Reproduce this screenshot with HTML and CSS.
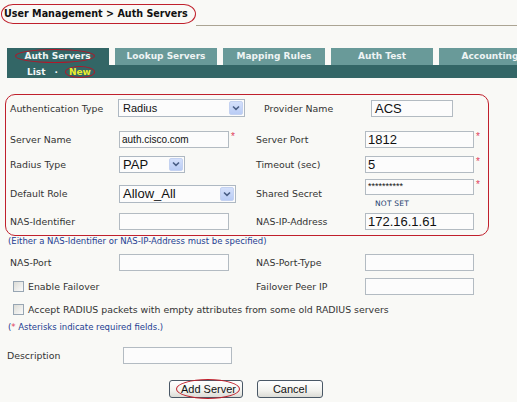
FILE: index.html
```html
<!DOCTYPE html>
<html>
<head>
<meta charset="utf-8">
<link rel="stylesheet" href="styles.css">
</head>
<body>
<div class="titlebar">
  <span class="title">User Management &gt; Auth Servers</span>
  <span class="rule"></span>
</div>

<div class="tabs">
  <div class="tabrow">
    <div class="tab active"><span class="mark-tab">Auth Servers</span></div>
    <div class="tab">Lookup Servers</div>
    <div class="tab">Mapping Rules</div>
    <div class="tab">Auth Test</div>
    <div class="tab">Accounting</div>
  </div>
  <div class="subbar">
    <span class="sub-link">List</span>
    <span class="sub-dot">·</span>
    <span class="sub-new">New</span>
  </div>
</div>

<div class="box">
  <div class="row">
    <div class="lbl">Authentication Type</div>
    <div class="cell">
      <div class="select w-auth"><span class="sel-val small">Radius</span><span class="sel-btn"><svg width="8" height="6" viewBox="0 0 8 6"><path d="M1 1.5 L4 4.3 L7 1.5" stroke="#4a5f86" stroke-width="1.6" fill="none"/></svg></span></div>
    </div>
    <div class="lbl lbl-prov">Provider Name</div>
    <div class="cell"><div class="field w-prov">ACS</div></div>
  </div>

  <div class="row r2">
    <div class="lbl">Server Name</div>
    <div class="cell"><div class="field w-left tiny">auth.cisco.com</div><span class="req">*</span></div>
    <div class="lbl">Server Port</div>
    <div class="cell"><div class="field w-right">1812</div><span class="req">*</span></div>
  </div>

  <div class="row r3">
    <div class="lbl">Radius Type</div>
    <div class="cell">
      <div class="select w-type"><span class="sel-val">PAP</span><span class="sel-btn"><svg width="8" height="6" viewBox="0 0 8 6"><path d="M1 1.5 L4 4.3 L7 1.5" stroke="#4a5f86" stroke-width="1.6" fill="none"/></svg></span></div>
    </div>
    <div class="lbl">Timeout (sec)</div>
    <div class="cell"><div class="field w-right">5</div><span class="req">*</span></div>
  </div>

  <div class="row r4">
    <div class="lbl">Default Role</div>
    <div class="cell">
      <div class="select w-role"><span class="sel-val">Allow_All</span><span class="sel-btn"><svg width="8" height="6" viewBox="0 0 8 6"><path d="M1 1.5 L4 4.3 L7 1.5" stroke="#4a5f86" stroke-width="1.6" fill="none"/></svg></span></div>
    </div>
    <div class="lbl">Shared Secret</div>
    <div class="cell cell-secret">
      <div class="secret-line"><div class="field w-right pwd">**********</div><span class="req">*</span></div>
      <div class="notset">NOT SET</div>
    </div>
  </div>

  <div class="row r5">
    <div class="lbl">NAS-Identifier</div>
    <div class="cell"><div class="field w-left"></div></div>
    <div class="lbl">NAS-IP-Address</div>
    <div class="cell"><div class="field w-right">172.16.1.61</div></div>
  </div>
</div>

<div class="note">(Either a NAS-Identifier or NAS-IP-Address must be specified)</div>

<div class="outer">
  <div class="row o1">
    <div class="lbl">NAS-Port</div>
    <div class="cell"><div class="field w-left"></div></div>
    <div class="lbl">NAS-Port-Type</div>
    <div class="cell"><div class="field w-right"></div></div>
  </div>
  <div class="row o2">
    <div class="check"><span class="cb"></span><span>Enable Failover</span></div>
    <div class="lbl">Failover Peer IP</div>
    <div class="cell"><div class="field w-right"></div></div>
  </div>
  <div class="row-single o3">
    <div class="check"><span class="cb"></span><span>Accept RADIUS packets with empty attributes from some old RADIUS servers</span></div>
  </div>
</div>

<div class="note note2">(<span class="note-req">*</span> Asterisks indicate required fields.)</div>

<div class="desc-row">
  <div class="lbl">Description</div>
  <div class="field w-desc"></div>
</div>

<div class="buttons">
  <button class="btn btn-add"><span class="mark-btn">Add Server</span></button>
  <button class="btn btn-cancel">Cancel</button>
</div>
</body>
</html>
```

FILE: styles.css
```css
* { box-sizing: border-box; }
html, body { margin: 0; padding: 0; }
body {
  width: 517px;
  height: 402px;
  overflow: hidden;
  background: #f9f9f6;
  font-family: "DejaVu Sans", Verdana, sans-serif;
  color: #333;
}

/* title */
.titlebar {
  display: flex;
  align-items: flex-start;
  height: 26px;
  padding-top: 4px;
}
.title {
  margin-left: 1px;
  padding: 0 7px 0 2px;
  height: 20px;
  line-height: 18px;
  font-weight: bold;
  font-size: 9.6px;
  color: #111;
  border: 1px solid #c0202c;
  border-radius: 12px / 10px;
  white-space: nowrap;
}
.rule {
  flex: 1;
  align-self: stretch;
  border-bottom: 1px solid #aba493;
}

/* tabs */
.tabs { margin: 22px 0 0 7px; }
.tabrow { display: flex; gap: 6px; height: 17px; }
.tab {
  flex: 0 0 102px;
  background: #699a99;
  color: #eef4f4;
  font-weight: bold;
  font-size: 9px;
  line-height: 17px;
  text-align: center;
  white-space: nowrap;
}
.tab.active { background: #336666; }
.mark-tab {
  display: inline-block;
  height: 14px;
  line-height: 12px;
  padding: 0 3px 0 8px;
  margin: 1px 0 0 -6px;
  border: 1px solid #b0182a;
  border-radius: 50%;
  vertical-align: top;
}
.subbar {
  height: 13px;
  background: #336666;
  display: flex;
  align-items: center;
  padding-left: 20px;
  font-weight: bold;
  font-size: 9px;
  color: #f4f8f8;
}
.sub-dot { margin-left: 9px; }
.sub-new {
  margin-left: 7px;
  height: 12px;
  line-height: 10px;
  padding: 0 3px;
  border: 1px solid #b0182a;
  border-radius: 50%;
  color: #eded2c;
}

/* form box */
.box {
  margin: 16px 0 0 5px;
  width: 484px;
  border: 1px solid #c0202c;
  border-radius: 10px;
  padding: 3px 0 4px 4px;
}
.row {
  display: grid;
  grid-template-columns: 109px 137px 109px 1fr;
  align-items: center;
  height: 20px;
}
.r2 { margin-top: 11px; }
.r3 { margin-top: 5px; }
.r4 { margin-top: 5px; height: 26px; }
.r5 { margin-top: 6px; }

.lbl {
  font-size: 9.4px;
  color: #333;
  white-space: nowrap;
}
.lbl-prov { padding-left: 8px; }
.cell { display: flex; align-items: center; }

.field {
  height: 17px;
  border: 1px solid #b3bbc2;
  background: #fcfcfc;
  font-family: "Liberation Sans", Arial, sans-serif;
  font-size: 13px;
  line-height: 15px;
  padding-left: 2px;
  color: #111;
  white-space: nowrap;
  overflow: hidden;
}
.field.tiny { font-size: 10px; line-height: 15px; }
.w-left { width: 110px; }
.w-right { width: 109px; }
.w-prov { width: 82px; margin-left: 6px; padding-left: 3px; }
.w-desc { width: 109px; }

.req {
  color: #e0405a;
  font-family: "Liberation Sans", Arial, sans-serif;
  font-size: 10px;
  line-height: 10px;
  margin: -5px 0 0 2px;
}

.select {
  display: flex;
  height: 18px;
  border: 1px solid #aeb8c2;
  background: #fcfcfc;
  padding: 1px;
}
.w-auth { width: 127px; margin-left: -1px; }
.w-type { width: 66px; height: 17px; }
.w-role { width: 117px; }
.sel-val {
  flex: 1;
  padding-left: 2px;
  font-family: "Liberation Sans", Arial, sans-serif;
  font-size: 13px;
  line-height: 14px;
  color: #111;
}
.sel-val.small { font-size: 11px; padding-left: 3px; }
.sel-btn {
  width: 14px;
  background: linear-gradient(#d4e0fb, #b9ccf5);
  border: 1px solid #c4d2f1;
  border-radius: 2px;
  display: flex;
  align-items: center;
  justify-content: center;
}

.cell-secret {
  align-self: start;
  flex-direction: column;
  align-items: flex-start;
}
.secret-line { display: flex; align-items: center; }
.field.pwd {
  height: 16px;
  font-size: 9px;
  line-height: 10px;
  padding-top: 1px;
}
.notset {
  margin: 4px 0 0 10px;
  font-size: 7.5px;
  color: #1c3d6e;
  letter-spacing: 0.2px;
}

/* below box */
.note {
  margin: 0 0 0 8px;
  height: 10px;
  line-height: 10px;
  font-size: 8.5px;
  color: #1e3e92;
  white-space: nowrap;
}
.note-req { color: #e0405a; }
.outer { margin-left: 10px; }
.o1 { margin-top: 6px; }
.o2 { margin-top: 4px; grid-template-columns: 246px 109px 1fr; }
.row-single { height: 20px; display: flex; align-items: center; }
.o3 { margin-top: 3px; }
.check {
  display: flex;
  align-items: center;
  font-size: 9.4px;
  color: #333;
  white-space: nowrap;
  padding-left: 3px;
}
.cb {
  width: 11px;
  height: 11px;
  border: 1px solid #98a6b3;
  background: linear-gradient(135deg, #dcdcd6, #fbfbfb);
  margin-right: 4px;
}
.note2 { margin-top: 3px; }

.desc-row {
  display: flex;
  align-items: center;
  height: 20px;
  margin: 13px 0 0 7px;
}
.desc-row .lbl { width: 116px; }

.buttons {
  display: flex;
  gap: 14px;
  margin: 15px 0 0 169px;
}
.btn {
  height: 18px;
  padding: 0;
  border: 1px solid #4a5866;
  border-radius: 3px;
  background: linear-gradient(#ffffff, #f2f2ee 60%, #dcdcd6);
  font-family: "Liberation Sans", Arial, sans-serif;
  font-size: 11px;
  color: #111;
  display: flex;
  align-items: center;
  justify-content: center;
}
.btn-add { width: 74px; }
.btn-cancel { width: 66px; }
.mark-btn {
  display: inline-block;
  height: 20px;
  line-height: 18px;
  margin: -2px 0 -2px 4px;
  padding: 0 3px 0 4px;
  border: 1px solid #c0202c;
  border-radius: 50%;
}
```
